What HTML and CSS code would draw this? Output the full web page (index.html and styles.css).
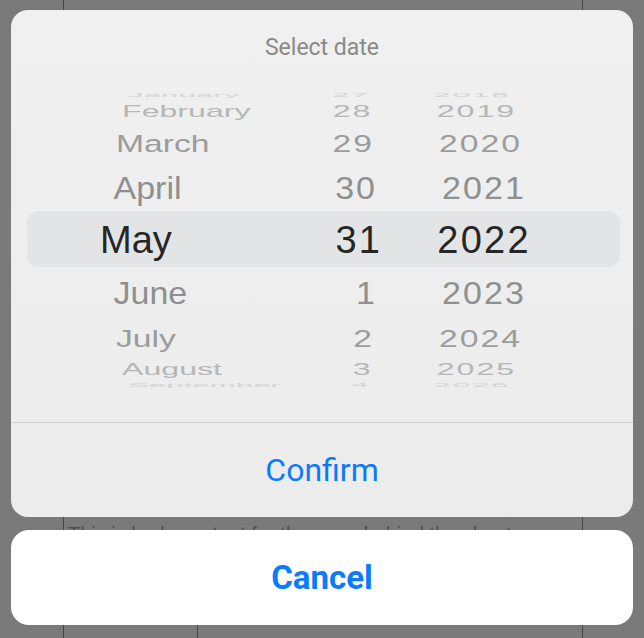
FILE: index.html
```html
<!DOCTYPE html>
<html lang="en">
<head>
<meta charset="utf-8">
<title>Select date</title>
<link rel="stylesheet" href="styles.css">
</head>
<body>
<div class="page">
  <div class="column">
    <p class="body-text">This is body content for the page behind the sheet.</p>
    <div class="table">
      <div class="cell narrow"></div>
      <div class="cell"></div>
    </div>
  </div>
</div>

<div class="sheet">
  <div class="card main">
    <div class="title">Select date</div>
    <div class="picker">
      <div class="band"></div>
      <div class="wheel">
        <div class="row k4 h16"><div class="m"><span class="t">January</span></div><div class="d"><span class="t">27</span></div><div class="y"><span class="t">2018</span></div></div>
        <div class="row k3 h32"><div class="m"><span class="t">February</span></div><div class="d"><span class="t">28</span></div><div class="y"><span class="t">2019</span></div></div>
        <div class="row k2 h45"><div class="m"><span class="t">March</span></div><div class="d"><span class="t">29</span></div><div class="y"><span class="t">2020</span></div></div>
        <div class="row k1 h52"><div class="m"><span class="t">April</span></div><div class="d"><span class="t">30</span></div><div class="y"><span class="t">2021</span></div></div>
        <div class="row k0 h52"><div class="m"><span class="t">May</span></div><div class="d"><span class="t">31</span></div><div class="y"><span class="t">2022</span></div></div>
        <div class="row k1 h45"><div class="m"><span class="t">June</span></div><div class="d"><span class="t">1</span></div><div class="y"><span class="t">2023</span></div></div>
        <div class="row k2 h31"><div class="m"><span class="t">July</span></div><div class="d"><span class="t">2</span></div><div class="y"><span class="t">2024</span></div></div>
        <div class="row k3 h16"><div class="m"><span class="t">August</span></div><div class="d"><span class="t">3</span></div><div class="y"><span class="t">2025</span></div></div>
        <div class="row k4 h0"><div class="m"><span class="t">September</span></div><div class="d"><span class="t">4</span></div><div class="y"><span class="t">2026</span></div></div>
      </div>
    </div>
    <div class="confirm">Confirm</div>
  </div>
  <div class="card cancel">Cancel</div>
</div>
</body>
</html>
```

FILE: styles.css
```css
html, body {
  margin: 0;
  padding: 0;
}

body {
  width: 644px;
  height: 638px;
  overflow: hidden;
  position: relative;
  background: #7a7a7a;
  font-family: "Liberation Sans", Arial, sans-serif;
}

/* ---------- dimmed page behind the sheet ---------- */
.page {
  height: 638px;
}

.column {
  margin-left: 63px;
  width: 520px;
  height: 638px;
  box-sizing: border-box;
  border-left: 1px solid #474747;
  border-right: 1px solid #474747;
  padding-top: 522px;
}

.body-text {
  margin: 0;
  padding-left: 4px;
  font-size: 20px;
  line-height: 24px;
  color: #4d4d4d;
  white-space: nowrap;
}

.table {
  display: flex;
  height: 80px;
  margin-top: 14px;
}

.cell.narrow {
  width: 133px;
  border-right: 1px solid #474747;
}

/* ---------- action sheet ---------- */
.sheet {
  position: absolute;
  left: 0;
  right: 0;
  bottom: 0;
  padding: 0 11px 13px;
  display: flex;
  flex-direction: column;
  gap: 13px;
}

.card {
  border-radius: 17px;
  overflow: hidden;
}

.main {
  background: linear-gradient(to bottom, #f0f0f0, #ececed);
  display: flex;
  flex-direction: column;
}

.title {
  height: 72px;
  padding-top: 2px;
  line-height: 72px;
  text-align: center;
  font-family: Roboto, "Liberation Sans", sans-serif;
  font-size: 23px;
  color: #8a8a8a;
}

/* ---------- wheel picker ---------- */
.picker {
  margin-top: 8px;
  height: 296px;
  display: grid;
  overflow: hidden;
}

.band,
.wheel {
  grid-area: 1 / 1;
}

.band {
  align-self: start;
  margin: 119px 13px 0 16px;
  height: 56px;
  border-radius: 12px;
  background: #e3e4e5;
}

.wheel {
  padding-top: 2.5px;
  display: flex;
  flex-direction: column;
}

.row {
  display: flex;
  align-items: flex-start;
  flex: 0 0 auto;
}

.h0 { height: 0; }
.h16 { height: 16px; }
.h31 { height: 31px; }
.h32 { height: 32px; }
.h45 { height: 45px; }
.h52 { height: 52.5px; }

.m, .d, .y {
  height: 0;
  display: flex;
  align-items: center;
}

.m {
  width: 289px;
  box-sizing: border-box;
  padding-left: 87px;
  justify-content: flex-start;
}

.d {
  width: 81px;
  justify-content: flex-end;
}

.y {
  width: 204px;
  justify-content: center;
}

.t {
  display: inline-block;
  white-space: nowrap;
  line-height: 1;
}

.d .t,
.y .t {
  letter-spacing: 0.06em;
  margin-right: -0.06em;
}

.m .t { transform-origin: left center; }
.d .t { transform-origin: right center; }
.y .t { transform-origin: center center; }

/* level 0: selected */
.k0 .t { font-size: 38px; color: #262626; }
.k0 .m .t { transform: translateX(2px); }
.k0 .d .t { transform: translateX(-1px); }

/* level 1 */
.k1 .t { font-size: 34px; color: #8f8f8f; }
.k1 .m .t { transform: translateX(15.5px) scale(1, 0.94); }
.k1 .d .t { transform: translateX(-6px) scale(1, 0.94); }
.k1 .y .t { transform: scale(1, 0.94); }

/* level 2 */
.k2 .t { font-size: 34px; color: #9c9c9c; }
.k2 .m .t { transform: translateX(18px) scale(0.99, 0.72); }
.k2 .d .t { transform: translateX(-9px) scale(0.99, 0.72); }
.k2 .y .t { transform: translateX(-3.5px) scale(0.99, 0.72); }

/* level 3 */
.k3 .t { font-size: 34px; color: #b6b6b6; }
.k3 .m .t { transform: translateX(24px) scale(0.945, 0.48); }
.k3 .d .t { transform: translateX(-10.5px) scale(0.945, 0.48); }
.k3 .y .t { transform: translateX(-7.5px) scale(0.945, 0.48); }

/* level 4 */
.k4 .t { font-size: 34px; color: #d3d3d3; }
.k4 .m .t { transform: translateX(30px) scale(0.92, 0.17); }
.k4 .d .t { transform: translateX(-12.5px) scale(0.92, 0.17); }
.k4 .y .t { transform: translateX(-12px) scale(0.92, 0.17); }

/* ---------- buttons ---------- */
.confirm {
  margin-top: 34px;
  border-top: 1px solid #d2d2d2;
  height: 94px;
  line-height: 94px;
  text-align: center;
  font-family: Roboto, "Liberation Sans", sans-serif;
  font-size: 32px;
  color: #0a7aff;
}

.cancel {
  background: #ffffff;
  height: 95px;
  line-height: 95px;
  text-align: center;
  font-family: Roboto, "Liberation Sans", sans-serif;
  font-size: 33px;
  font-weight: 700;
  color: #0a7aff;
  border-radius: 18px;
}
```
